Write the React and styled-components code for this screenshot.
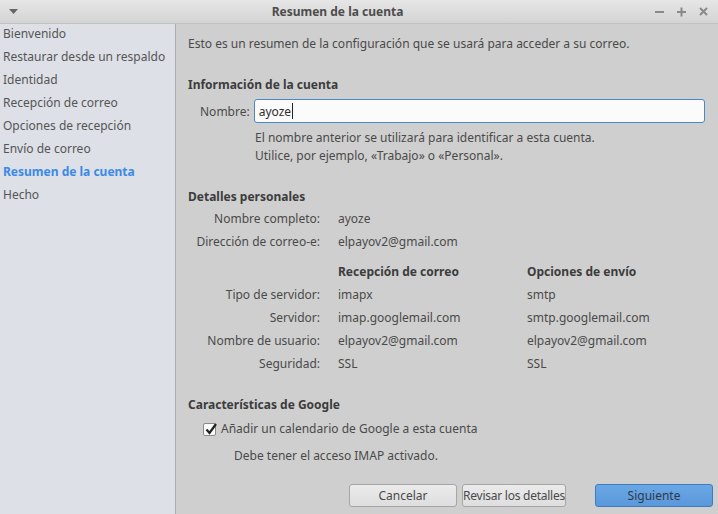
import React from 'react'
import styled, { createGlobalStyle } from 'styled-components'

const GlobalStyle = createGlobalStyle`
  html, body {
    margin: 0;
    padding: 0;
    background: #cfcfcf;
  }
  body {
    font-family: "Noto Sans", "Open Sans", sans-serif;
    font-size: 12px;
    color: #4a4a4a;
  }
`

const Window = styled.div`
  width: 718px;
  height: 514px;
  display: flex;
  flex-direction: column;
  overflow: hidden;
`

const TitleBar = styled.div`
  height: 24px;
  flex: none;
  display: flex;
  align-items: center;
  justify-content: space-between;
  padding: 0 8px 0 9px;
  background: linear-gradient(#e6e6e6, #d4d4d4);
  border-bottom: 1px solid #c2c2c2;
  box-sizing: border-box;

  h1 {
    margin: 0;
    font-size: 12px;
    font-weight: 700;
    color: #4d4d4d;
    flex: 1;
    text-align: center;
    padding-left: 4px;
  }
`

const Controls = styled.div`
  display: flex;
  gap: 9px;
  align-items: center;
`

const Body = styled.div`
  flex: 1;
  display: flex;
  min-height: 0;
`

const Sidebar = styled.ul`
  width: 176px;
  flex: none;
  margin: 0;
  padding: 1px 0 0 3px;
  list-style: none;
  background: #dde0e6;
  border-right: 1px solid #a9acb1;
  box-sizing: border-box;
`

const Step = styled.li`
  line-height: 18px;
  height: 23px;
  white-space: nowrap;
  color: ${p => (p.$active ? '#3a8ae6' : '#555')};
  font-weight: ${p => (p.$active ? 700 : 400)};
`

const Main = styled.div`
  flex: 1;
  display: flex;
  flex-direction: column;
  padding: 10px 5px 7px 12px;
  background: #cfcfcf;
`

const Intro = styled.p`
  margin: 0;
  line-height: 20px;
`

const Heading = styled.h2`
  margin: ${p => p.$top}px 0 0;
  font-size: 12px;
  font-weight: 700;
  line-height: 20px;
  color: #3c3c3c;
`

const NameRow = styled.div`
  display: flex;
  align-items: center;
  gap: 4px;
  margin: 4px 8px 0 12px;
`

const TextInput = styled.div`
  flex: 1;
  height: 24px;
  box-sizing: border-box;
  border: 1px solid #4a86c8;
  border-radius: 3px;
  background: #fbfbfb;
  padding: 0 4px;
  display: flex;
  align-items: center;
  color: #2e2e2e;

  &::after {
    content: '';
    width: 1px;
    height: 16px;
    background: #222;
    margin-left: 1px;
  }
`

const Help = styled.p`
  margin: 6px 0 0 67px;
  line-height: 18px;
`

const Details = styled.div`
  display: grid;
  grid-template-columns: 132px 171px auto;
  column-gap: 18px;
  line-height: 23px;
`

const Label = styled.span`
  text-align: right;
  white-space: nowrap;
`

const ColHead = styled.span`
  font-weight: 700;
  color: #3c3c3c;
  margin-top: ${p => (p.$gap ? '7px' : 0)};
`

const Check = styled.label`
  display: flex;
  align-items: center;
  gap: 5px;
  margin: 4px 0 0 15px;
  line-height: 20px;
`

const Box = styled.span`
  width: 13px;
  height: 13px;
  box-sizing: border-box;
  border: 1px solid #8a8a8a;
  border-radius: 2px;
  background: #fafafa;
  position: relative;

  svg {
    position: absolute;
    left: 0;
    top: -2px;
  }
`

const Note = styled.p`
  margin: 7px 0 0 46px;
  line-height: 20px;
`

const Buttons = styled.div`
  margin-top: auto;
  display: flex;
  justify-content: flex-end;
  gap: 5px;
`

const Button = styled.button`
  width: ${p => p.$w}px;
  height: 23px;
  margin-left: ${p => p.$gap || 0}px;
  font-family: inherit;
  font-size: 12px;
  letter-spacing: ${p => (p.$tight ? '-0.25px' : 'normal')};
  white-space: nowrap;
  overflow: hidden;
  color: ${p => (p.$primary ? '#2f3a48' : '#4a4a4a')};
  border: 1px solid ${p => (p.$primary ? '#3f7bbf' : '#a6a6a6')};
  border-radius: 3px;
  background: ${p =>
    p.$primary
      ? 'linear-gradient(#6aa7e6, #5a98da)'
      : 'linear-gradient(#ebebeb, #dedede)'};
  padding: 0;
`

const steps = [
  'Bienvenido',
  'Restaurar desde un respaldo',
  'Identidad',
  'Recepción de correo',
  'Opciones de recepción',
  'Envío de correo',
  'Resumen de la cuenta',
  'Hecho',
]

const rows = [
  ['Tipo de servidor:', 'imapx', 'smtp'],
  ['Servidor:', 'imap.googlemail.com', 'smtp.googlemail.com'],
  ['Nombre de usuario:', 'elpayov2@gmail.com', 'elpayov2@gmail.com'],
  ['Seguridad:', 'SSL', 'SSL'],
]

export default function App() {
  return (
    <Window>
      <GlobalStyle />
      <TitleBar>
        <svg width="9" height="5" viewBox="0 0 9 5">
          <path d="M0 0h9L4.5 5z" fill="#666" />
        </svg>
        <h1>Resumen de la cuenta</h1>
        <Controls>
          <svg width="13" height="13" viewBox="0 0 13 13">
            <path d="M2 7h9" stroke="#8a8a8a" strokeWidth="2" />
          </svg>
          <svg width="13" height="13" viewBox="0 0 13 13">
            <path d="M2 7h9M6.5 2.5v9" stroke="#8a8a8a" strokeWidth="2" />
          </svg>
          <svg width="13" height="13" viewBox="0 0 13 13">
            <path d="M3 3l7 7M10 3l-7 7" stroke="#8a8a8a" strokeWidth="2" />
          </svg>
        </Controls>
      </TitleBar>
      <Body>
        <Sidebar>
          {steps.map(s => (
            <Step key={s} $active={s === 'Resumen de la cuenta'}>{s}</Step>
          ))}
        </Sidebar>
        <Main>
          <Intro>Esto es un resumen de la configuración que se usará para acceder a su correo.</Intro>

          <Heading $top={21}>Información de la cuenta</Heading>
          <NameRow>
            <span>Nombre:</span>
            <TextInput>ayoze</TextInput>
          </NameRow>
          <Help>
            El nombre anterior se utilizará para identificar a esta cuenta.<br />
            Utilice, por ejemplo, «Trabajo» o «Personal».
          </Help>

          <Heading $top={22}>Detalles personales</Heading>
          <Details>
            <Label>Nombre completo:</Label>
            <span>ayoze</span>
            <span />
            <Label>Dirección de correo-e:</Label>
            <span>elpayov2@gmail.com</span>
            <span />
            <span />
            <ColHead $gap>Recepción de correo</ColHead>
            <ColHead $gap>Opciones de envío</ColHead>
            {rows.map(([l, a, b]) => (
              <React.Fragment key={l}>
                <Label>{l}</Label>
                <span>{a}</span>
                <span>{b}</span>
              </React.Fragment>
            ))}
          </Details>

          <Heading $top={20}>Características de Google</Heading>
          <Check>
            <Box>
              <svg width="14" height="14" viewBox="0 0 14 14">
                <path d="M2.5 7.5l3 3.5L12 2" fill="none" stroke="#222" strokeWidth="2.2" />
              </svg>
            </Box>
            Añadir un calendario de Google a esta cuenta
          </Check>
          <Note>Debe tener el acceso IMAP activado.</Note>

          <Buttons>
            <Button $w={108}>Cancelar</Button>
            <Button $w={104} $tight>Revisar los detalles</Button>
            <Button $w={118} $gap={24} $primary>Siguiente</Button>
          </Buttons>
        </Main>
      </Body>
    </Window>
  )
}
